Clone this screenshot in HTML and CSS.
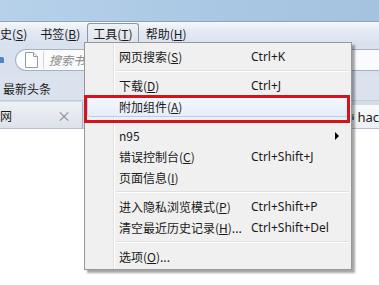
FILE: index.html
```html
<!DOCTYPE html>
<html>
<head>
  <title>工具菜单</title>
  <link rel="stylesheet" href="styles.css">
</head>
<body>
  <div class="window">
    <div class="titlebar"></div>

    <div class="menubar">
      <span class="menu-title">史(<u>S</u>)</span>
      <span class="menu-title">书签(<u>B</u>)</span>
      <span class="menu-title open">工具(<u>T</u>)</span>
      <span class="menu-title">帮助(<u>H</u>)</span>
    </div>

    <div class="toolbar">
      <span class="home-icon"></span>
      <div class="searchbox">
        <svg class="page-icon" width="13" height="16" viewBox="0 0 13 16">
          <path d="M0.5 0.5 H8.5 L12.5 4.5 V15.5 H0.5 Z" fill="#fff" stroke="#9a9a9a"/>
          <path d="M8.5 0.5 V4.5 H12.5" fill="#eee" stroke="#9a9a9a"/>
        </svg>
        <span class="search-divider"></span>
        <span class="search-hint">搜索书</span>
      </div>
    </div>

    <div class="bookmarks">最新头条</div>

    <div class="tabstrip">
      <div class="tab">
        <span class="tab-label">网</span>
        <span class="tab-close">×</span>
      </div>
      <div class="tab tab-other">
        <svg class="favicon" width="5" height="14" viewBox="0 0 5 14">
          <rect x="0" y="1" width="5" height="6" fill="#6aa84f"/>
          <rect x="0" y="7" width="5" height="6" fill="#3c78d8"/>
          <rect x="1" y="3" width="3" height="2" fill="#ffd966"/>
        </svg>
        <span class="tab-label">hac</span>
      </div>
    </div>

    <div class="content"></div>
  </div>

  <div class="dropdown">
    <div class="item"><span class="label">网页搜索(<u>S</u>)</span><span class="key">Ctrl+K</span></div>
    <div class="separator"></div>
    <div class="item"><span class="label">下载(<u>D</u>)</span><span class="key">Ctrl+J</span></div>
    <div class="item hover"><span class="label">附加组件(<u>A</u>)</span></div>
    <div class="separator"></div>
    <div class="item submenu"><span class="label">n95</span></div>
    <div class="item"><span class="label">错误控制台(<u>C</u>)</span><span class="key">Ctrl+Shift+J</span></div>
    <div class="item"><span class="label">页面信息(<u>I</u>)</span></div>
    <div class="separator"></div>
    <div class="item"><span class="label">进入隐私浏览模式(<u>P</u>)</span><span class="key">Ctrl+Shift+P</span></div>
    <div class="item"><span class="label">清空最近历史记录(<u>H</u>)...</span><span class="key">Ctrl+Shift+Del</span></div>
    <div class="separator"></div>
    <div class="item"><span class="label">选项(<u>O</u>)...</span></div>
  </div>

  <div class="annotation"></div>
</body>
</html>
```

FILE: styles.css
```css
body {
  margin: 0;
  width: 379px;
  height: 285px;
  overflow: hidden;
  position: relative;
  font-family: "Noto Sans CJK SC", "Noto Sans", sans-serif;
  font-size: 12px;
  color: #1a1a1a;
  background: #fff;
}

.window {
  display: flex;
  flex-direction: column;
  height: 285px;
}

.titlebar {
  height: 21px;
  background: linear-gradient(to right, #b7d1ea, #a9c7e3 60%, #a5c3df);
  border-bottom: 1px solid #8ea4bd;
}

/* menu bar */
.menubar {
  height: 20px;
  display: flex;
  gap: 1px;
  margin-left: -6px;
  background: linear-gradient(#f6f8fc, #e4eaf4 45%, #dbe3ef);
}

.menu-title {
  padding: 0 6px;
  line-height: 19px;
  margin-top: 1px;
  padding-top: 1px;
  white-space: nowrap;
}

.menu-title.open {
  padding: 0 5px;
  border: 1px solid #8d97a5;
  border-bottom: none;
  border-radius: 3px 3px 0 0;
  line-height: 19px;
  background: linear-gradient(#eef1f5, #dfe4ea);
}

/* toolbar */
.toolbar {
  height: 33px;
  display: flex;
  align-items: center;
  background: #d9e1ee;
}

.home-icon {
  width: 4px;
  height: 6px;
  margin-top: 2px;
  background: #4f86c6;
  border-radius: 0 2px 0 0;
}

.searchbox {
  flex: 1;
  margin-left: 11px;
  margin-top: 2px;
  height: 20px;
  display: flex;
  align-items: center;
  background: #fafbfc;
  border: 1px solid #a9b3c0;
  border-right: none;
  border-radius: 11px 0 0 11px;
}

.page-icon {
  margin-left: 9px;
}

.search-divider {
  width: 1px;
  height: 18px;
  margin-left: 5px;
  background: #d0d5dc;
}

.search-hint {
  margin-left: 5px;
  color: #8a8a8a;
  font-style: italic;
}

/* bookmarks */
.bookmarks {
  height: 25px;
  line-height: 27px;
  padding-left: 3px;
  background: #dae2ee;
  border-bottom: 1px solid #c3ccda;
}

/* tabs */
.tabstrip {
  height: 27px;
  display: flex;
  background: #d4dcea;
  border-bottom: 1px solid #b9c1cd;
}

.tab {
  width: 82px;
  display: flex;
  align-items: center;
  margin-top: 1px;
  background: linear-gradient(#eef1f5, #dde2e9);
  border-right: 1px solid #a9b0ba;
}

.tab-label {
  flex: 1;
}

.tab-close {
  color: #8d8d8d;
  font-size: 14px;
  margin-right: 11px;
}

.tab-other {
  margin-left: auto;
  width: 27px;
  margin-top: 4px;
  background: linear-gradient(#f8f9fb, #eceff3);
  border-right: none;
  border-left: 1px solid #b0b8c4;
  padding-left: 1px;
}

.tab-other .tab-label {
  margin-left: 3px;
  font-family: "Noto Sans", sans-serif;
  font-size: 13px;
}

.content {
  flex: 1;
  background: #fff;
}

/* dropdown menu */
.dropdown {
  position: absolute;
  left: 84px;
  top: 42px;
  width: 266px;
  padding: 3px 0 2px;
  background-color: #f0f0f0;
  background-image: linear-gradient(to right, transparent 28px, #e0e0e0 28px, #e0e0e0 29px, #fff 29px, #fff 30px, transparent 30px);
  border: 1px solid #979797;
  box-shadow: 3px 3px 2px rgba(0, 0, 0, 0.35);
}

.item {
  height: 21px;
  display: flex;
  align-items: center;
  padding-left: 34px;
  position: relative;
  white-space: nowrap;
}

.item .label {
  width: 132px;
}

.item .key {
  font-family: "Noto Sans", sans-serif;
}

.item.hover {
  margin: 0 2px;
  padding-left: 31px;
  height: 19px;
  border: 1px solid #b4cff2;
  border-radius: 3px;
  background: linear-gradient(#f3f7fd, #e6eef9);
}

.item.submenu::after {
  content: "";
  position: absolute;
  right: 12px;
  top: 7px;
  border-left: 4px solid #000;
  border-top: 4px solid transparent;
  border-bottom: 4px solid transparent;
}

.separator {
  height: 8px;
  margin-left: 31px;
  margin-right: 2px;
  background: linear-gradient(transparent 3px, #e0e0e0 3px, #e0e0e0 4px, #fff 4px, #fff 5px, transparent 5px);
}

/* red highlight drawn on the screenshot */
.annotation {
  position: absolute;
  left: 84px;
  top: 95px;
  width: 266px;
  height: 28px;
  box-sizing: border-box;
  border: 3px solid #d3141c;
}
```
